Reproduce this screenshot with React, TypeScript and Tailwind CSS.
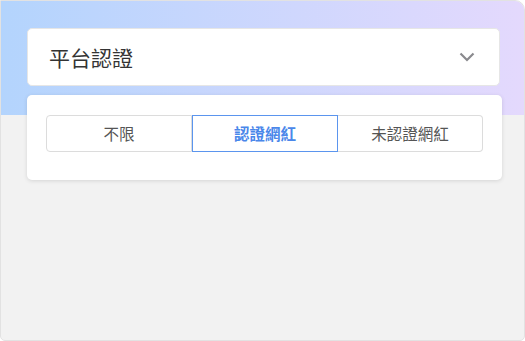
import React from "react";

export default function App() {
  const font = { fontFamily: '"Noto Sans CJK TC", "Noto Sans", sans-serif' };
  return (
    <div className="w-[525px] h-[341px] bg-white" style={font}>
      <div className="relative w-[525px] h-[341px] rounded-tr-[10px] rounded-b-[5px] border border-[#e2e2e2] bg-[#f2f2f2] overflow-hidden">
        <div className="absolute left-0 top-0 w-full h-[114px] bg-gradient-to-r from-[#b3d4fd] to-[#e4d9fd]" />
        <div className="relative flex flex-col pl-[26px] pr-[23px] pt-[27px]">
          <div className="h-[58px] w-[473px] bg-white rounded-[5px] border border-[#e6e6e6] flex items-center justify-between pl-[21px] pr-[24px]">
            <span className="text-[21px] text-[#333333] leading-none">平台認證</span>
            <svg width="16" height="10" viewBox="0 0 16 10" fill="none">
              <path d="M1.5 1.5 L8 8 L14.5 1.5" stroke="#8a8a8e" strokeWidth="2.2" />
            </svg>
          </div>
          <div className="mt-[9px] h-[85px] w-[475px] bg-white rounded-[5px] shadow-[0_1px_4px_rgba(0,0,0,0.12)] pl-[19px] pt-[20px]">
            <div className="flex w-[437px] h-[37px]">
              <div className="flex-1 flex items-center justify-center border border-[#dcdcdc] rounded-l-[4px] text-[15.5px] text-[#555555]">不限</div>
              <div className="flex-1 flex items-center justify-center border border-[#5b95ee] text-[15.5px] font-bold text-[#4a87ea]">認證網紅</div>
              <div className="flex-1 flex items-center justify-center border border-l-0 border-[#dcdcdc] rounded-r-[4px] text-[15.5px] text-[#555555]">未認證網紅</div>
            </div>
          </div>
        </div>
      </div>
    </div>
  );
}
